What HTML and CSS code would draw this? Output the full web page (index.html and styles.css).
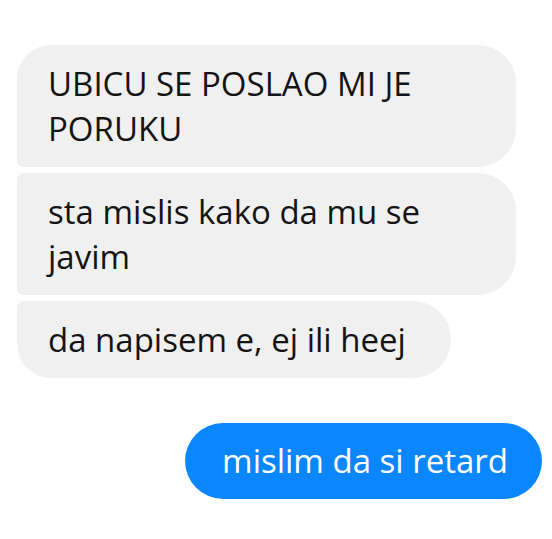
FILE: index.html
```html
<!DOCTYPE html>
<html lang="sr">
<head>
    <meta charset="UTF-8">
    <meta name="viewport" content="width=device-width, initial-scale=1.0">
    <title>Poruke</title>
    <link rel="stylesheet" href="styles.css">
</head>
<body>
    <div class="chat">
        <div class="group incoming">
            <div class="bubble first">UBICU SE POSLAO MI JE PORUKU</div>
            <div class="bubble middle">sta mislis kako da mu se javim</div>
            <div class="bubble last">da napisem e, ej ili heej</div>
        </div>
        <div class="group outgoing">
            <div class="bubble single">mislim da si retard</div>
        </div>
    </div>
</body>
</html>
```

FILE: styles.css
```css
body {
    margin: 0;
    background-color: #fff;
    font-family: "Open Sans", "Noto Sans", sans-serif;
    color: #141414;
}
.chat {
    display: flex;
    flex-direction: column;
    gap: 45px;
    padding: 45px 10px 0 17px;
}
.group {
    display: flex;
    flex-direction: column;
    gap: 6px;
}
.incoming {
    align-items: flex-start;
}
.outgoing {
    align-items: flex-end;
}
.bubble {
    box-sizing: border-box;
    max-width: 499px;
    padding: 16px 45px 16px 31px;
    font-size: 33px;
    line-height: 45px;
    background-color: #f0f0f0;
    border-radius: 38px;
}
/* скругления как в мессенджере */
.incoming .first {
    border-radius: 34px 38px 38px 6px;
}
.incoming .middle {
    border-radius: 6px 38px 38px 6px;
}
.incoming .last {
    border-radius: 6px 38px 38px 34px;
}
.outgoing .single {
    padding: 15px 34px 16px 37px;
    background-color: #0a86ff;
    color: #fff;
}
```
